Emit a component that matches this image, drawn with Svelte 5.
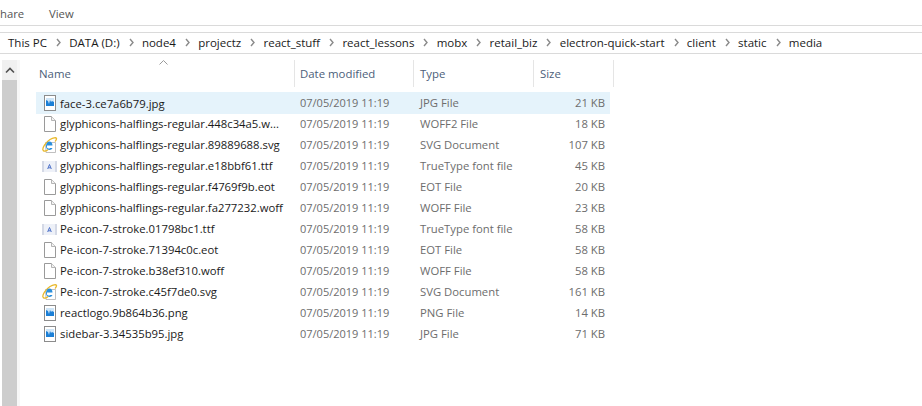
<script>
  const crumbs = ['This PC', 'DATA (D:)', 'node4', 'projectz', 'react_stuff', 'react_lessons', 'mobx', 'retail_biz', 'electron-quick-start', 'client', 'static', 'media'];

  const files = [
    { name: 'face-3.ce7a6b79.jpg', type: 'JPG File', size: '21 KB', icon: 'img', selected: true },
    { name: 'glyphicons-halflings-regular.448c34a5.w...', type: 'WOFF2 File', size: '18 KB', icon: 'doc' },
    { name: 'glyphicons-halflings-regular.89889688.svg', type: 'SVG Document', size: '107 KB', icon: 'ie' },
    { name: 'glyphicons-halflings-regular.e18bbf61.ttf', type: 'TrueType font file', size: '45 KB', icon: 'font' },
    { name: 'glyphicons-halflings-regular.f4769f9b.eot', type: 'EOT File', size: '20 KB', icon: 'doc' },
    { name: 'glyphicons-halflings-regular.fa277232.woff', type: 'WOFF File', size: '23 KB', icon: 'doc' },
    { name: 'Pe-icon-7-stroke.01798bc1.ttf', type: 'TrueType font file', size: '58 KB', icon: 'font' },
    { name: 'Pe-icon-7-stroke.71394c0c.eot', type: 'EOT File', size: '58 KB', icon: 'doc' },
    { name: 'Pe-icon-7-stroke.b38ef310.woff', type: 'WOFF File', size: '58 KB', icon: 'doc' },
    { name: 'Pe-icon-7-stroke.c45f7de0.svg', type: 'SVG Document', size: '161 KB', icon: 'ie' },
    { name: 'reactlogo.9b864b36.png', type: 'PNG File', size: '14 KB', icon: 'img' },
    { name: 'sidebar-3.34535b95.jpg', type: 'JPG File', size: '71 KB', icon: 'img' }
  ];
</script>

<div class="window">
  <div class="ribbon">
    <span class="tab share">hare</span>
    <span class="tab">View</span>
  </div>

  <div class="address">
    {#each crumbs as crumb, i}
      {#if i > 0}
        <svg class="sep" width="7" height="9" viewBox="0 0 7 9"><path d="M2 1l3 3.500L2 8" fill="none" stroke="#8a8a8a" stroke-width="1.4" /></svg>
      {/if}
      <span class="crumb">{crumb}</span>
    {/each}
  </div>

  <div class="body">
    <div class="scrollbar">
      <div class="scroll-up">
        <svg width="10" height="7" viewBox="0 0 10 7"><path d="M1 5.500l4-4 4 4" fill="none" stroke="#505050" stroke-width="1.6" /></svg>
      </div>
      <div class="scroll-thumb"></div>
    </div>

    <div class="list">
      <div class="head">
        <div class="col first">
          Name
          <svg class="sort" width="9" height="5" viewBox="0 0 9 5"><path d="M.5 4.500l4-4 4 4" fill="none" stroke="#9a9a9a" /></svg>
        </div>
        <div class="col second">Date modified</div>
        <div class="col">Type</div>
        <div class="col">Size</div>
      </div>

      <div class="rows">
        {#each files as file}
          <div class="row" class:selected={file.selected}>
            <div class="name">
              <span class="icon">
                {#if file.icon === 'img'}
                  <svg width="18" height="16" viewBox="0 0 18 16">
                    <rect x="4.500" y=".5" width="11" height="15" fill="#fff" stroke="#8c8c8c" />
                    <rect x="6" y="3" width="8" height="8" fill="#1b7fd6" />
                    <path d="M6 5l2 1 1 3 1-4 1 2 1-1 2 1V3H6z" fill="#cfe6f8" />
                  </svg>
                {:else if file.icon === 'doc'}
                  <svg width="18" height="16" viewBox="0 0 18 16">
                    <path d="M4.500.5h7l4 4v11h-11z" fill="#fff" stroke="#9a9a9a" />
                    <path d="M11.500.5v4h4" fill="#f2f2f2" stroke="#b5b5b5" />
                  </svg>
                {:else if file.icon === 'font'}
                  <svg width="18" height="16" viewBox="0 0 18 16">
                    <rect x="2" y="3" width="15" height="11" fill="#eef1f8" />
                    <rect x="2" y="3" width="2" height="11" fill="#d4d9e6" />
                    <rect x="15" y="3" width="2" height="11" fill="#d4d9e6" />
                    <path d="M7.700 11l1.800-4.500 1.800 4.500M8.400 9.800h2.200" fill="none" stroke="#4a6fc8" />
                  </svg>
                {:else}
                  <svg width="18" height="16" viewBox="0 0 18 16">
                    <path d="M5.500 5.500h10v10h-9.500z" fill="#fff" stroke="#b0b0b0" stroke-width=".8" />
                    <path d="M3 13c-1-2 3-8 7-10.500 3-1.500 6-2.500 6.500-1 .3 1-.7 2-1.500 3" fill="none" stroke="#e9b92c" stroke-width="1.300" />
                    <path d="M7 8.500h5.500c0-2.500-1.300-4-3-4C7.500 4.500 6 6.500 6 9c0 2.500 1.500 4 3.600 4 1.300 0 2.400-.7 2.900-2H10.200c-.8 1-2.600.6-3.200-.5z" fill="#2a8fdc" />
                    <path d="M3 13c.5 2 3.500 1 5-.500" fill="none" stroke="#e9b92c" stroke-width="1.300" />
                  </svg>
                {/if}
              </span>
              <span class="label">{file.name}</span>
            </div>
            <div class="date">07/05/2019 11:19</div>
            <div class="type">{file.type}</div>
            <div class="size">{file.size}</div>
          </div>
        {/each}
      </div>
    </div>
  </div>
</div>

<style>
  :global(body) {
    margin: 0;
    background: #fff;
  }
  .window {
    width: 922px;
    height: 406px;
    overflow: hidden;
    display: flex;
    flex-direction: column;
    font-family: "Open Sans", "Noto Sans", sans-serif;
    font-size: 11.3px;
    color: #1a1a1a;
  }
  .ribbon {
    height: 25px;
    flex: none;
    display: flex;
    border-bottom: 1px solid #dadada;
  }
  .tab {
    line-height: 27px;
    color: #555;
  }
  .share {
    width: 49px;
  }
  .address {
    flex: none;
    margin-top: 6px;
    height: 19px;
    padding: 0 0 1px 8px;
    display: flex;
    align-items: center;
    border-top: 1px solid #dadada;
    border-bottom: 1px solid #dadada;
    font-size: 11.5px;
  }
  .sep {
    margin: 0 7.3px 0 8px;
    flex: none;
  }
  .crumb {
    white-space: nowrap;
  }
  .body {
    flex: 1;
    display: flex;
    min-height: 0;
  }
  .scrollbar {
    flex: none;
    width: 15px;
    margin: 6px 3px 0 2px;
    display: flex;
    flex-direction: column;
    background: #f0f0f0;
    box-shadow: 3px 0 0 #f7f7f7;
  }
  .scroll-up {
    height: 20px;
    display: flex;
    align-items: center;
    justify-content: center;
  }
  .scroll-thumb {
    flex: 1;
    background: #cdcdcd;
  }
  .list {
    flex: 1;
    padding-left: 16px;
  }
  .head {
    display: grid;
    grid-template-columns: 259px 119px 120px 80px;
    margin-top: 6px;
    height: 25px;
    color: #4c607a;
    font-size: 11.4px;
  }
  .col {
    position: relative;
    padding-left: 6px;
    line-height: 27px;
    border-right: 1px solid #e5e5e5;
  }
  .col.first {
    padding-left: 3px;
  }
  .col.second {
    padding-left: 5px;
  }
  .sort {
    position: absolute;
    left: 123px;
    top: 0;
  }
  .rows {
    margin-top: 7px;
    width: 574px;
  }
  .row {
    display: grid;
    grid-template-columns: 258px 119px 120px 77px;
    height: 21px;
    line-height: 21px;
    color: #6d6d6d;
    white-space: nowrap;
  }
  .row.selected {
    background: #e5f3fb;
    height: 22px;
    margin-bottom: -1px;
  }
  .name {
    display: flex;
    align-items: center;
    color: #1a1a1a;
    padding-left: 4px;
  }
  .icon {
    flex: none;
    width: 20px;
    height: 16px;
    display: block;
  }
  .icon svg {
    display: block;
  }
  .date {
    padding-left: 6px;
    font-size: 11px;
  }
  .type {
    padding-left: 7px;
  }
  .size {
    text-align: right;
    padding-right: 5px;
  }
</style>
